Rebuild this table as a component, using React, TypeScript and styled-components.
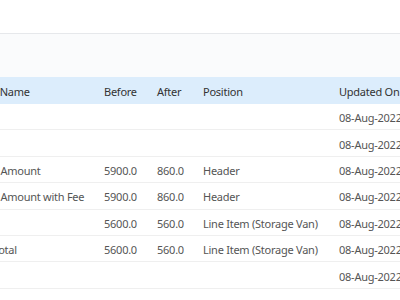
import React, { useLayoutEffect, useRef } from 'react';
import styled, { createGlobalStyle } from 'styled-components';

const GlobalStyle = createGlobalStyle`
  html, body {
    margin: 0;
    padding: 0;
    background: #ffffff;
    font-family: "Noto Sans", "Open Sans", sans-serif;
  }
`;

const COLS = '130px 53px 46px 136px 110px';

type Row = {
  prefix: string;
  name: string;
  before: string;
  after: string;
  position: string;
  updated: string;
};

const ROWS: Row[] = [
  { prefix: '', name: '', before: '', after: '', position: '', updated: '08-Aug-2022' },
  { prefix: '', name: '', before: '', after: '', position: '', updated: '08-Aug-2022' },
  { prefix: 'Base ', name: 'Amount', before: '5900.0', after: '860.0', position: 'Header', updated: '08-Aug-2022' },
  { prefix: 'Base ', name: 'Amount with Fee', before: '5900.0', after: '860.0', position: 'Header', updated: '08-Aug-2022' },
  { prefix: '', name: '', before: '5600.0', after: '560.0', position: 'Line Item (Storage Van)', updated: '08-Aug-2022' },
  { prefix: 'Tax ', name: 'Total', before: '5600.0', after: '560.0', position: 'Line Item (Storage Van)', updated: '08-Aug-2022' },
  { prefix: '', name: '', before: '', after: '', position: '', updated: '08-Aug-2022' },
  { prefix: '', name: '', before: '', after: '', position: '', updated: '' },
];

const App: React.FC = () => {
  const scrollRef = useRef<HTMLDivElement>(null);
  const anchorRef = useRef<HTMLSpanElement>(null);

  // the grid is scrolled sideways so the name column is cut off on the left
  useLayoutEffect(() => {
    const box = scrollRef.current;
    const anchor = anchorRef.current;
    if (box && anchor) {
      box.scrollLeft = anchor.getBoundingClientRect().left - box.getBoundingClientRect().left;
    }
  }, []);

  return (
    <>
      <GlobalStyle />
      <Page>
        <TopBar />
        <Toolbar />
        <GridScroll ref={scrollRef}>
          <GridInner>
            <HeaderRow>
              <HeadCell>
                Field <span ref={anchorRef}>Name</span>
              </HeadCell>
              <HeadCell>Before</HeadCell>
              <HeadCell>After</HeadCell>
              <HeadCell>Position</HeadCell>
              <HeadCell>Updated On</HeadCell>
            </HeaderRow>
            {ROWS.map((r, i) => (
              <BodyRow key={i}>
                <Cell>{r.prefix}{r.name}</Cell>
                <Cell>{r.before}</Cell>
                <Cell>{r.after}</Cell>
                <Cell>{r.position}</Cell>
                <Cell>{r.updated}</Cell>
              </BodyRow>
            ))}
          </GridInner>
        </GridScroll>
      </Page>
    </>
  );
};

const Page = styled.div`
  width: 400px;
  height: 300px;
  overflow: hidden;
  display: flex;
  flex-direction: column;
  background: #ffffff;
`;

const TopBar = styled.div`
  flex: 0 0 33px;
  background: #ffffff;
  border-bottom: 1px solid #e6e8eb;
  box-shadow: 0 1px 2px rgba(0, 0, 0, 0.03);
`;

const Toolbar = styled.div`
  flex: 0 0 43px;
  background: #fafbfc;
`;

const GridScroll = styled.div`
  flex: 1;
  overflow: hidden;
`;

const GridInner = styled.div`
  width: max-content;
`;

const HeaderRow = styled.div`
  display: grid;
  grid-template-columns: ${COLS};
  height: 27px;
  background: #dcedfc;
  align-items: center;
`;

const BodyRow = styled.div`
  display: grid;
  grid-template-columns: ${COLS};
  height: 26.4px;
  box-sizing: border-box;
  border-bottom: 1px solid #efefef;
  align-items: center;
`;

const HeadCell = styled.div`
  padding: 2px 8px 0;
  font-size: 11px;
  letter-spacing: -0.25px;
  color: #333333;
  white-space: nowrap;
`;

const Cell = styled.div`
  padding: 2px 8px 0;
  font-size: 11px;
  letter-spacing: -0.25px;
  color: #555555;
  white-space: nowrap;
`;

export default App;
